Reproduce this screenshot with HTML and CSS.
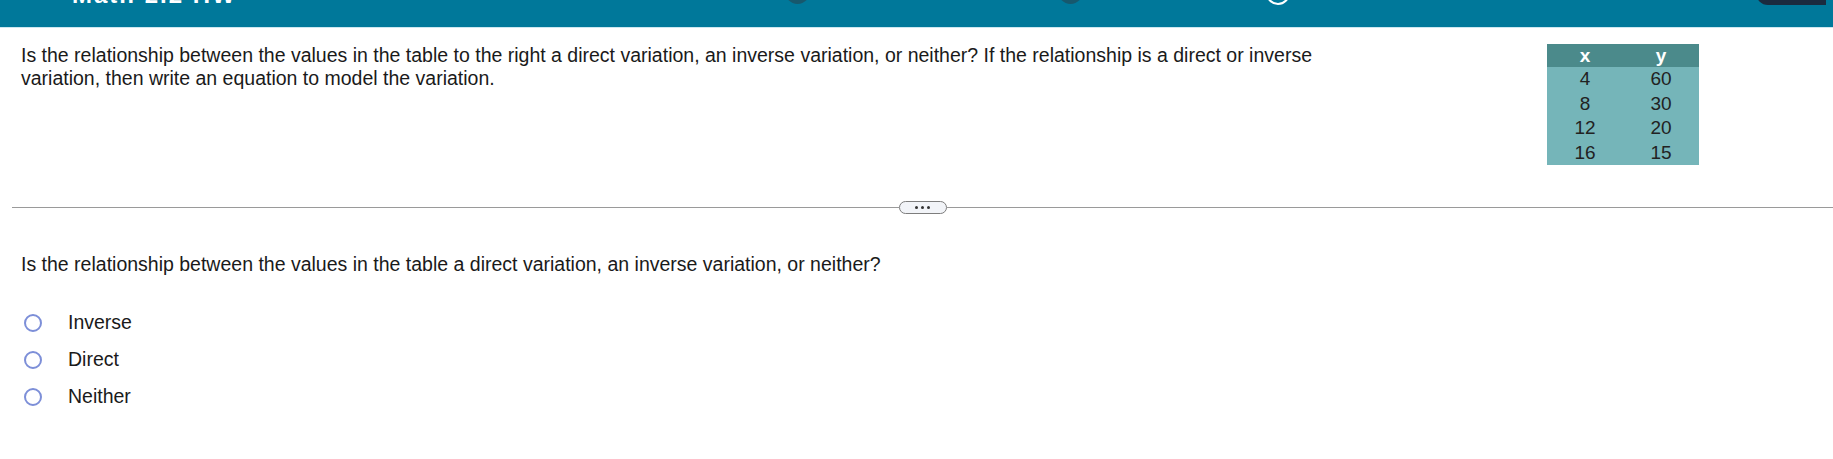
FILE: index.html
```html
<!DOCTYPE html>
<html lang="en">
<head>
<meta charset="utf-8">
<title>Question</title>
<link rel="stylesheet" href="styles.css">
</head>
<body>
<header class="topbar">
  <span class="title">Math 2.2 HW</span>
  <span class="dot dot-a"></span>
  <span class="dot dot-b"></span>
  <span class="ring"></span>
  <span class="corner-btn"></span>
</header>
<main class="content">
  <section class="prompt">
    <p class="prompt-text">Is the relationship between the values in the table to the right a direct variation, an inverse variation, or neither? If the relationship is a direct or inverse variation, then write an equation to model the variation.</p>
    <table class="data">
      <thead><tr><th>x</th><th>y</th></tr></thead>
      <tbody>
        <tr><td>4</td><td>60</td></tr>
        <tr><td>8</td><td>30</td></tr>
        <tr><td>12</td><td>20</td></tr>
        <tr><td>16</td><td>15</td></tr>
      </tbody>
    </table>
  </section>
  <div class="divider">
    <span class="rule"></span>
    <span class="more"><i></i><i></i><i></i></span>
    <span class="rule"></span>
  </div>
  <p class="question">Is the relationship between the values in the table a direct variation, an inverse variation, or neither?</p>
  <ul class="choices">
    <li><span class="radio"></span><span class="label">Inverse</span></li>
    <li><span class="radio"></span><span class="label">Direct</span></li>
    <li><span class="radio"></span><span class="label">Neither</span></li>
  </ul>
</main>
</body>
</html>
```
FILE: styles.css
```css
* { box-sizing: border-box; }
html, body { margin: 0; padding: 0; background: #ffffff; }
body {
  font-family: "Liberation Sans", Arial, sans-serif;
  color: #1a1a1a;
  width: 1833px;
  height: 459px;
  overflow: hidden;
}
.topbar {
  height: 28px;
  background: #00789a;
  border-bottom: 1px solid #cce7f0;
  display: flex;
  align-items: flex-start;
  overflow: hidden;
}
.title {
  flex: none;
  margin-left: 72px;
  margin-top: -17px;
  font-size: 24px;
  line-height: 24px;
  font-weight: bold;
  color: #ffffff;
  white-space: nowrap;
  width: 166px;
  letter-spacing: 2px;
}
.dot {
  width: 25px;
  height: 25px;
  border-radius: 50%;
  background: #17586d;
  margin-top: -21px;
  flex: none;
}
.dot-a { margin-left: 547px; }
.dot-b { margin-left: 248px; }
.ring {
  width: 24px;
  height: 24px;
  border-radius: 50%;
  border: 2px solid #ffffff;
  margin-top: -19px;
  margin-left: 183px;
  flex: none;
}
.corner-btn {
  flex: none;
  width: 70px;
  height: 28px;
  margin-top: -23px;
  margin-left: 466px;
  background: #1b2b3f;
  border-radius: 12px 0 0 12px;
}
.content { padding: 0; }
.prompt {
  display: flex;
  align-items: flex-start;
  padding: 16px 134px 0 21px;
  height: 172px;
}
.prompt-text {
  margin: 0;
  width: 1320px;
  font-size: 19.5px;
  line-height: 23px;
}
.data {
  margin-left: auto;
  border-collapse: collapse;
  width: 152px;
  font-size: 19px;
  background: #75b5b9;
}
.data th {
  background: #4b8a8b;
  color: #ffffff;
  font-weight: bold;
  height: 23px;
  padding: 0;
  width: 76px;
  line-height: 20px;
}
.data td {
  text-align: center;
  height: 24.5px;
  padding: 0;
  line-height: 20px;
  color: #222;
}
.divider {
  display: flex;
  align-items: center;
  padding-left: 12px;
  height: 14px;
  margin-top: 0;
}
.rule { flex: 1; height: 1px; background: #9a9a9a; }
.more {
  width: 48px;
  height: 13px;
  border: 1px solid #7d7d7d;
  border-radius: 7px;
  background: #f2f4f8;
  display: flex;
  align-items: center;
  justify-content: center;
  gap: 3px;
  flex: none;
}
.more i {
  width: 3px;
  height: 3px;
  border-radius: 50%;
  background: #333;
}
.question {
  margin: 39px 0 0 21px;
  font-size: 19.5px;
  line-height: 23px;
}
.choices {
  list-style: none;
  margin: 28px 0 0 0;
  padding: 0 0 0 24px;
}
.choices li {
  display: flex;
  align-items: center;
  height: 37px;
}
.radio {
  width: 18px;
  height: 18px;
  border-radius: 50%;
  border: 2px solid #7d8fd8;
  background: #fff;
  flex: none;
}
.label {
  margin-left: 26px;
  font-size: 19.5px;
}
```
